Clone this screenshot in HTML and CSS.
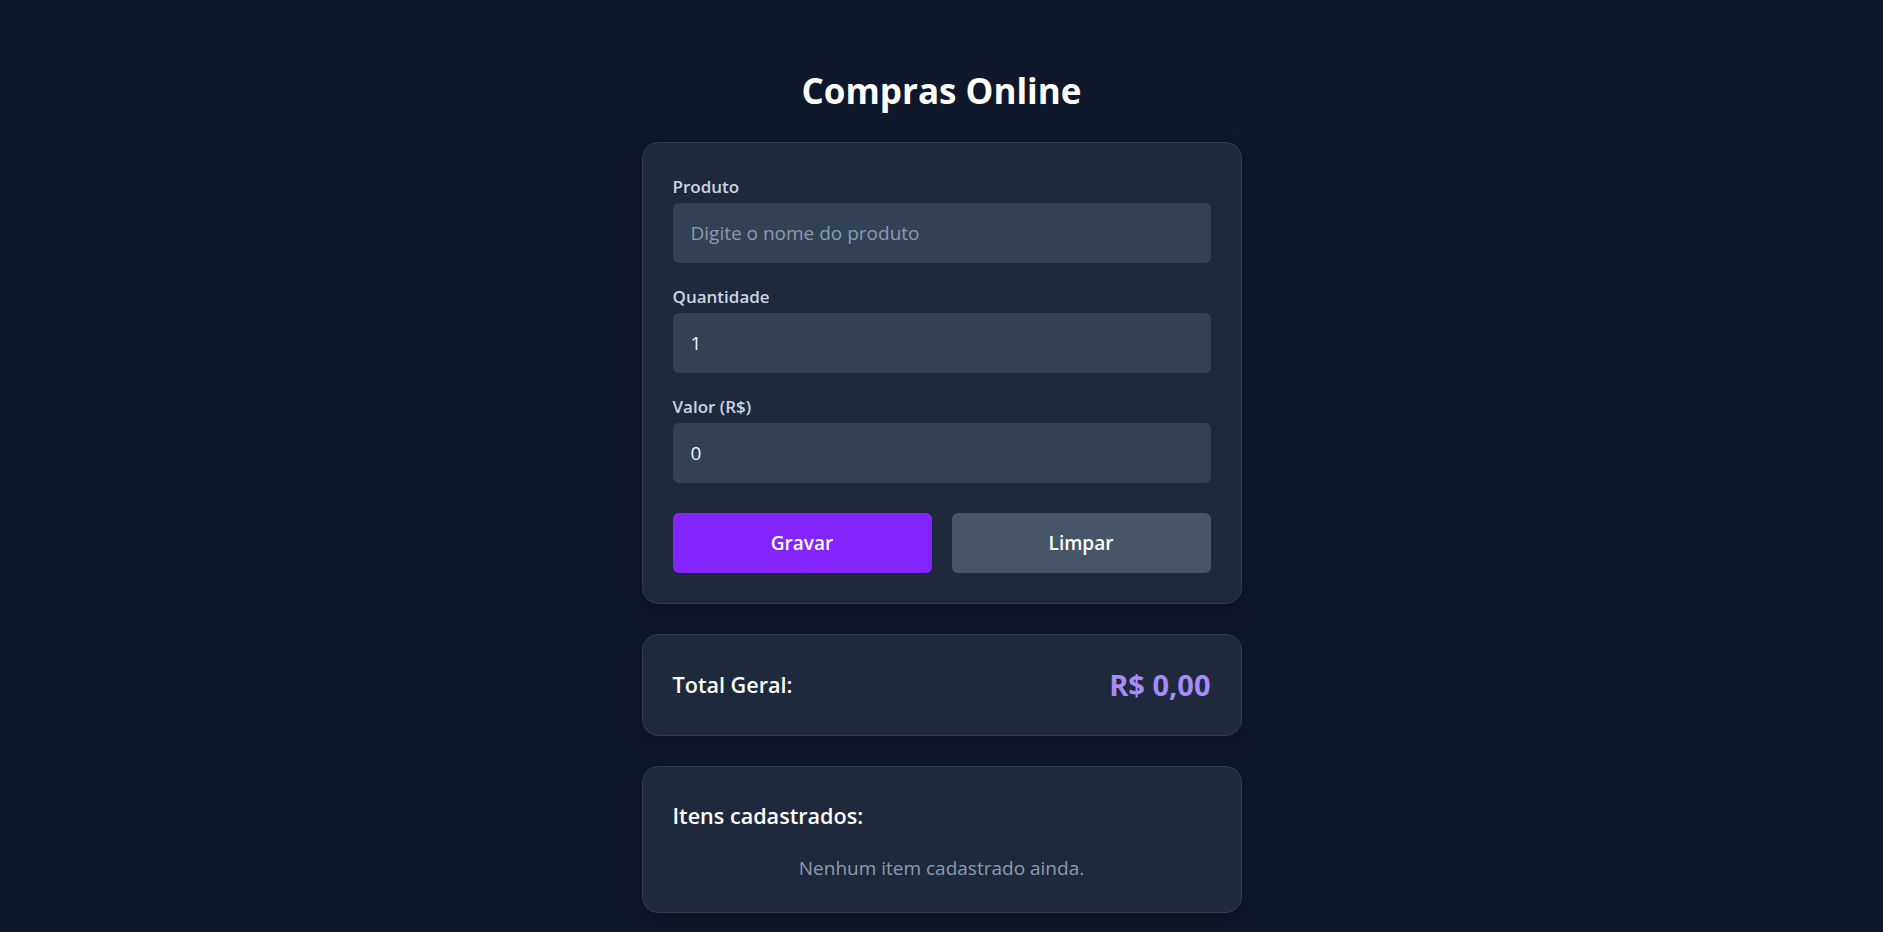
FILE: index.html
```html
<!DOCTYPE html>
<html lang="pt-BR">
<head>
<meta charset="utf-8">
<title>Compras Online</title>
<link rel="stylesheet" href="styles.css">
</head>
<body>
  <main class="app">
    <h1 class="title">Compras Online</h1>

    <section class="card form-card">
      <div class="field">
        <label class="label" for="produto">Produto</label>
        <input class="input" id="produto" type="text" placeholder="Digite o nome do produto">
      </div>
      <div class="field">
        <label class="label" for="quantidade">Quantidade</label>
        <input class="input" id="quantidade" type="text" value="1">
      </div>
      <div class="field">
        <label class="label" for="valor">Valor (R$)</label>
        <input class="input" id="valor" type="text" value="0">
      </div>
      <div class="actions">
        <button class="btn btn-primary" type="button">Gravar</button>
        <button class="btn btn-secondary" type="button">Limpar</button>
      </div>
    </section>

    <section class="card total-card">
      <span class="total-label">Total Geral:</span>
      <span class="total-value">R$ 0,00</span>
    </section>

    <section class="card list-card">
      <h2 class="list-title">Itens cadastrados:</h2>
      <p class="empty">Nenhum item cadastrado ainda.</p>
    </section>
  </main>
</body>
</html>
```

FILE: styles.css
```css
* {
  box-sizing: border-box;
}

html, body {
  margin: 0;
  padding: 0;
  background: #0f172a;
}

body {
  font-family: "Segoe UI", "Open Sans", "Noto Sans", sans-serif;
  color: #f1f5f9;
}

.app {
  width: 600px;
  margin: 0 auto;
  padding: 67px 0 40px;
}

.title {
  margin: 0 0 27px;
  font-size: 35px;
  line-height: 48px;
  font-weight: 700;
  text-align: center;
  color: #ffffff;
}

.card {
  background: #1e293b;
  border: 1px solid #2e3b51;
  border-radius: 16px;
  padding: 30px;
  box-shadow: 0 6px 16px rgba(0, 0, 0, 0.25);
}

.form-card {
  display: flex;
  flex-direction: column;
  gap: 20px;
}

.field {
  display: flex;
  flex-direction: column;
}

.label {
  font-size: 17px;
  line-height: 28px;
  font-weight: 600;
  color: #cbd5e1;
  margin-bottom: 2px;
}

.input {
  height: 60px;
  width: 100%;
  padding: 0 18px;
  border: none;
  border-radius: 6px;
  background: #334155;
  color: #f1f5f9;
  font-family: inherit;
  font-size: 19px;
  outline: none;
}

.input::placeholder {
  color: #8b9bb3;
}

.actions {
  display: flex;
  gap: 20px;
  margin-top: 10px;
}

.btn {
  flex: 1;
  height: 60px;
  border: none;
  border-radius: 6px;
  color: #ffffff;
  font-family: inherit;
  font-size: 19px;
  font-weight: 600;
  cursor: pointer;
}

.btn-primary {
  background: #8424ff;
}

.btn-secondary {
  background: #475569;
}

.total-card {
  margin-top: 30px;
  display: flex;
  align-items: center;
  justify-content: space-between;
}

.total-label {
  font-size: 21.6px;
  line-height: 40px;
  font-weight: 600;
  color: #ffffff;
}

.total-value {
  font-size: 29px;
  line-height: 40px;
  font-weight: 700;
  color: #a78bfa;
}

.list-card {
  margin-top: 30px;
}

.list-title {
  margin: 0;
  font-size: 21.6px;
  line-height: 38px;
  font-weight: 600;
  color: #ffffff;
}

.empty {
  margin: 19px 0 0;
  font-size: 19px;
  line-height: 28px;
  text-align: center;
  color: #8b9bb3;
}
```
